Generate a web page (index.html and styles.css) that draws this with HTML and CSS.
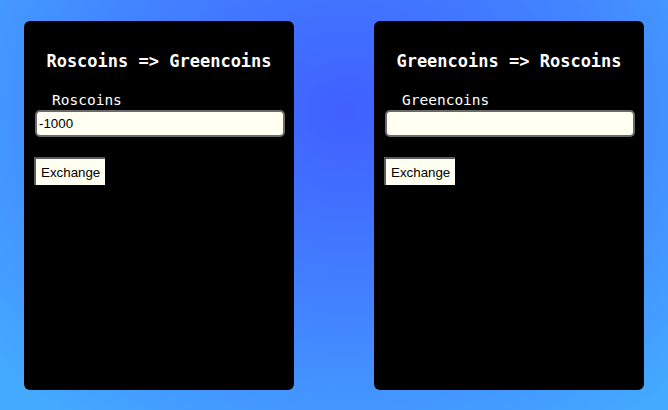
FILE: index.html
```html
<!DOCTYPE html>
<html>
<head>
<meta charset="utf-8">
<link rel="stylesheet" href="styles.css">
</head>
<body>
<div class="page">
  <div class="card">
    <h2 class="title">Roscoins =&gt; Greencoins</h2>
    <label class="label">Roscoins</label>
    <input class="field" type="text" value="-1000">
    <button class="btn">Exchange</button>
  </div>
  <div class="card">
    <h2 class="title">Greencoins =&gt; Roscoins</h2>
    <label class="label">Greencoins</label>
    <input class="field" type="text" value="">
    <button class="btn">Exchange</button>
  </div>
</div>
</body>
</html>
```
FILE: styles.css
```css
html, body {
  margin: 0;
  padding: 0;
  height: 100%;
}
body {
  background: radial-gradient(ellipse 70% 95% at 52% 27%, #4060ff 0%, #4282ff 50%, #44aaff 100%);
  overflow: hidden;
}
.page {
  display: flex;
  gap: 80px;
  padding: 21px 0 0 24px;
}
.card {
  width: 270px;
  height: 369px;
  box-sizing: border-box;
  background: #000;
  border-radius: 6px;
  padding: 0 10px;
  display: flex;
  flex-direction: column;
  align-items: flex-start;
}
.title {
  align-self: stretch;
  margin: 30px 0 0;
  font-family: "DejaVu Sans Mono", monospace;
  font-weight: bold;
  font-size: 17px;
  line-height: 20px;
  color: #fff;
  text-align: center;
}
.label {
  margin: 21px 0 0 18px;
  font-family: "DejaVu Sans Mono", monospace;
  font-size: 14.5px;
  line-height: 17px;
  color: #fff;
}
.field {
  margin: 1px 0 0 1px;
  width: 250px;
  height: 27px;
  box-sizing: border-box;
  border: 2px solid #6a6a6a;
  border-radius: 5px;
  background: #fffff2;
  padding: 0 2px;
  font-family: "Liberation Sans", Arial, sans-serif;
  font-size: 13.33px;
  color: #000;
  outline: none;
}
.btn {
  margin-top: 20px;
  height: 28px;
  box-sizing: border-box;
  border: none;
  border-top: 2px solid #5c5c5c;
  border-left: 2px solid #5c5c5c;
  background: #fffff2;
  padding: 0 5px;
  font-family: "Liberation Sans", Arial, sans-serif;
  font-size: 13.33px;
  color: #000;
}
```
